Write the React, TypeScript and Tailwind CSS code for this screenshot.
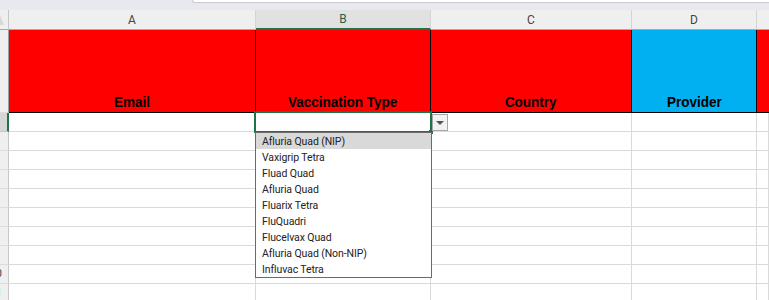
import React from "react";

const items = [
  "Afluria Quad (NIP)",
  "Vaxigrip Tetra",
  "Fluad Quad",
  "Afluria Quad",
  "Fluarix Tetra",
  "FluQuadri",
  "Flucelvax Quad",
  "Afluria Quad (Non-NIP)",
  "Influvac Tetra",
];

const grid = "grid grid-cols-[9px_247px_175px_201px_125px_1fr]";
const ui = { fontFamily: '"Roboto", "Liberation Sans", sans-serif' };
const bold = { fontFamily: '"Liberation Sans", Arial, sans-serif' };

function BlankRow({ n }: { n: number }) {
  const label = n >= 10 ? String(n) : "";
  return (
    <div className={grid + " h-[19px]"}>
      <div className="flex items-center justify-end overflow-hidden border-r border-b border-[#c6c6c6] border-b-[#dcdcdc] bg-[#efefef] pr-[6px] text-[11px]" style={ui}>
        <span className={n === 11 ? "text-[#3f8fe0]" : "text-[#444]"}>{label}</span>
      </div>
      {[0, 1, 2, 3, 4].map((i) => (
        <div key={i} className="border-r border-b border-[#dadada] bg-white" />
      ))}
    </div>
  );
}

function Head({ children, bg }: { children: React.ReactNode; bg: string }) {
  return (
    <div className={"flex items-end justify-center border-r border-b border-black pb-[1px] leading-[18px] " + bg}>
      <span className="inline-block origin-bottom scale-x-[0.9] whitespace-nowrap">{children}</span>
    </div>
  );
}

export default function App() {
  return (
    <div className="relative h-[300px] w-[769px] overflow-hidden bg-white" style={ui}>
      {/* strip above column headers */}
      <div className="flex h-[10px] bg-[#e8e8ef]">
        <div className="w-[192px]" />
        <div className="h-[3px] flex-1 rounded-bl-[4px] border-b border-l border-[#c9c9cf] bg-white" />
      </div>

      {/* column letters */}
      <div className={grid + " h-[20px] text-[12px] text-[#444]"}>
        <div className="relative border-r border-b border-[#c6c6c6] border-b-[#a9a9a9] bg-[#efefef]">
          <div className="absolute bottom-[4px] left-0 h-0 w-0 border-t-[10px] border-l-[4px] border-t-transparent border-l-[#d8d8d8]" />
        </div>
        <div className="flex items-center justify-center border-r border-b border-[#d4d4d4] border-b-[#a9a9a9] bg-[#efefef]">A</div>
        <div className="flex items-center justify-center border-r border-b-2 border-[#d4d4d4] border-b-[#217346] bg-[#e1e1e1] text-[#2d5f48]">B</div>
        <div className="flex items-center justify-center border-r border-b border-[#d4d4d4] border-b-[#a9a9a9] bg-[#efefef]">C</div>
        <div className="flex items-center justify-center border-r border-b border-[#d4d4d4] border-b-[#a9a9a9] bg-[#efefef]">D</div>
        <div className="border-b border-[#a9a9a9] bg-[#efefef]" />
      </div>

      {/* header row */}
      <div className={grid + " h-[83px] text-[15px] font-bold text-black"} style={bold}>
        <div className="border-r border-b border-[#a0a0a0] border-b-[#dcdcdc] bg-[#efefef]" />
        <Head bg="bg-[#ff0000]">Email</Head>
        <Head bg="bg-[#ff0000]">Vaccination Type</Head>
        <Head bg="bg-[#ff0000]">Country</Head>
        <Head bg="bg-[#00b0f0]">Provider</Head>
        <div className="border-b border-black bg-[#ff0000]" />
      </div>

      {/* selected row */}
      <div className={grid + " h-[19px]"}>
        <div className="border-r-2 border-b border-[#217346] border-b-[#c6c6c6] bg-[#d6d6d6]" />
        {[0, 1, 2, 3, 4].map((i) => (
          <div key={i} className="border-r border-b border-[#dadada] bg-white" />
        ))}
      </div>

      {[3, 4, 5, 6, 7, 8, 9, 10, 11].map((n) => (
        <BlankRow key={n} n={n} />
      ))}

      {/* active cell */}
      <div className="absolute left-[254px] top-[111px] h-[22px] w-[178px] border-2 border-[#217346]" />
      <div className="absolute left-[429px] top-[130px] h-[4px] w-[4px] bg-[#217346]" />

      {/* dropdown button */}
      <div className="absolute left-[432px] top-[114px] flex h-[17px] w-[16px] items-center justify-center border border-[#a8a8a8] bg-[#f2f2f2]">
        <div className="h-0 w-0 border-x-[4px] border-t-[4px] border-x-transparent border-t-[#555]" />
      </div>

      {/* list */}
      <div className="absolute left-[255px] top-[132px] w-[177px] border border-[#6a6a6a] bg-white text-[10.5px] tracking-[-0.1px] text-[#222]" style={ui}>
        {items.map((t, i) => (
          <div key={t} className={"flex h-[16px] items-center pl-[6px] pt-[1px] " + (i === 0 ? "bg-[#d9d9d9]" : "")}>
            {t}
          </div>
        ))}
      </div>
    </div>
  );
}
